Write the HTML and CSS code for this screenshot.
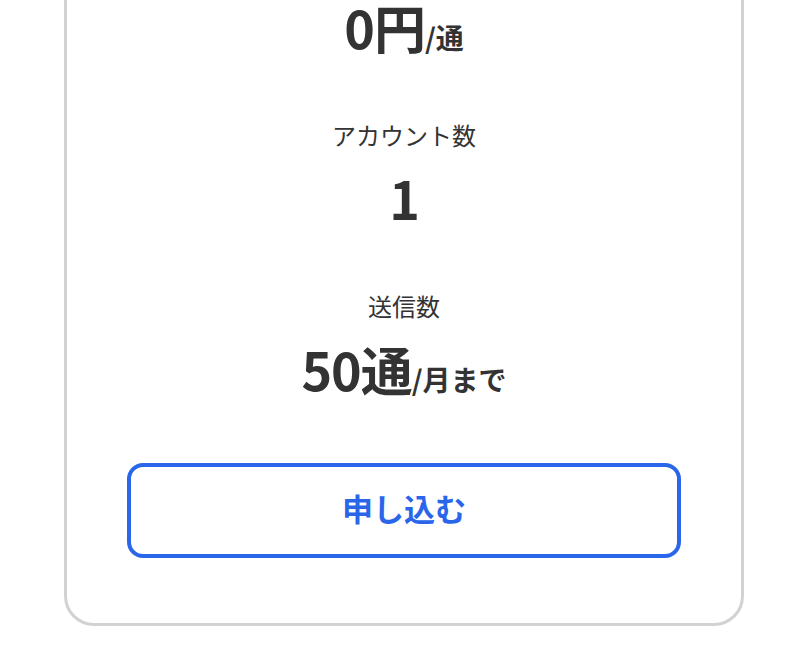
FILE: index.html
```html
<!DOCTYPE html>
<html lang="ja">
<head>
<meta charset="utf-8">
<link rel="stylesheet" href="styles.css">
</head>
<body>
<div class="card">
  <div class="value first"><span class="big">0円</span><span class="unit">/通</span></div>
  <div class="item">
    <div class="label">アカウント数</div>
    <div class="value"><span class="big">1</span></div>
  </div>
  <div class="item">
    <div class="label">送信数</div>
    <div class="value"><span class="big">50通</span><span class="unit">/月まで</span></div>
  </div>
  <button class="apply">申し込む</button>
</div>
</body>
</html>
```
FILE: styles.css
```css
html, body {
  margin: 0;
  padding: 0;
  background: #ffffff;
}
body {
  font-family: "Noto Sans CJK JP", "Noto Sans", sans-serif;
  color: #333333;
}
.card {
  box-sizing: border-box;
  width: 680px;
  margin: -40px auto 0;
  border: 3px solid #d4d2d1;
  border-radius: 30px;
  padding: 37px 60px 65px;
  display: flex;
  flex-direction: column;
  align-items: stretch;
}
.item {
  margin-top: 60px;
  display: flex;
  flex-direction: column;
  align-items: center;
}
.label {
  font-size: 24px;
  line-height: 36px;
  margin-bottom: 15px;
  font-weight: 400;
}
.value {
  text-align: center;
  line-height: 60px;
  height: 60px;
  font-weight: 700;
  white-space: nowrap;
}
.value.first {
  line-height: 54px;
  height: 54px;
  margin-bottom: 3px;
}
.big,
.unit {
  display: inline-block;
}
.big {
  font-size: 52px;
  letter-spacing: -1px;
}
.unit {
  font-size: 28px;
}
.apply {
  margin-top: 64px;
  height: 95px;
  box-sizing: border-box;
  border: 4px solid #2a66ea;
  border-radius: 16px;
  background: #ffffff;
  color: #2a66ea;
  font-family: "Noto Sans CJK JP", "Noto Sans", sans-serif;
  font-size: 31px;
  font-weight: 700;
  padding: 0 0 6px;
  cursor: pointer;
}
```
